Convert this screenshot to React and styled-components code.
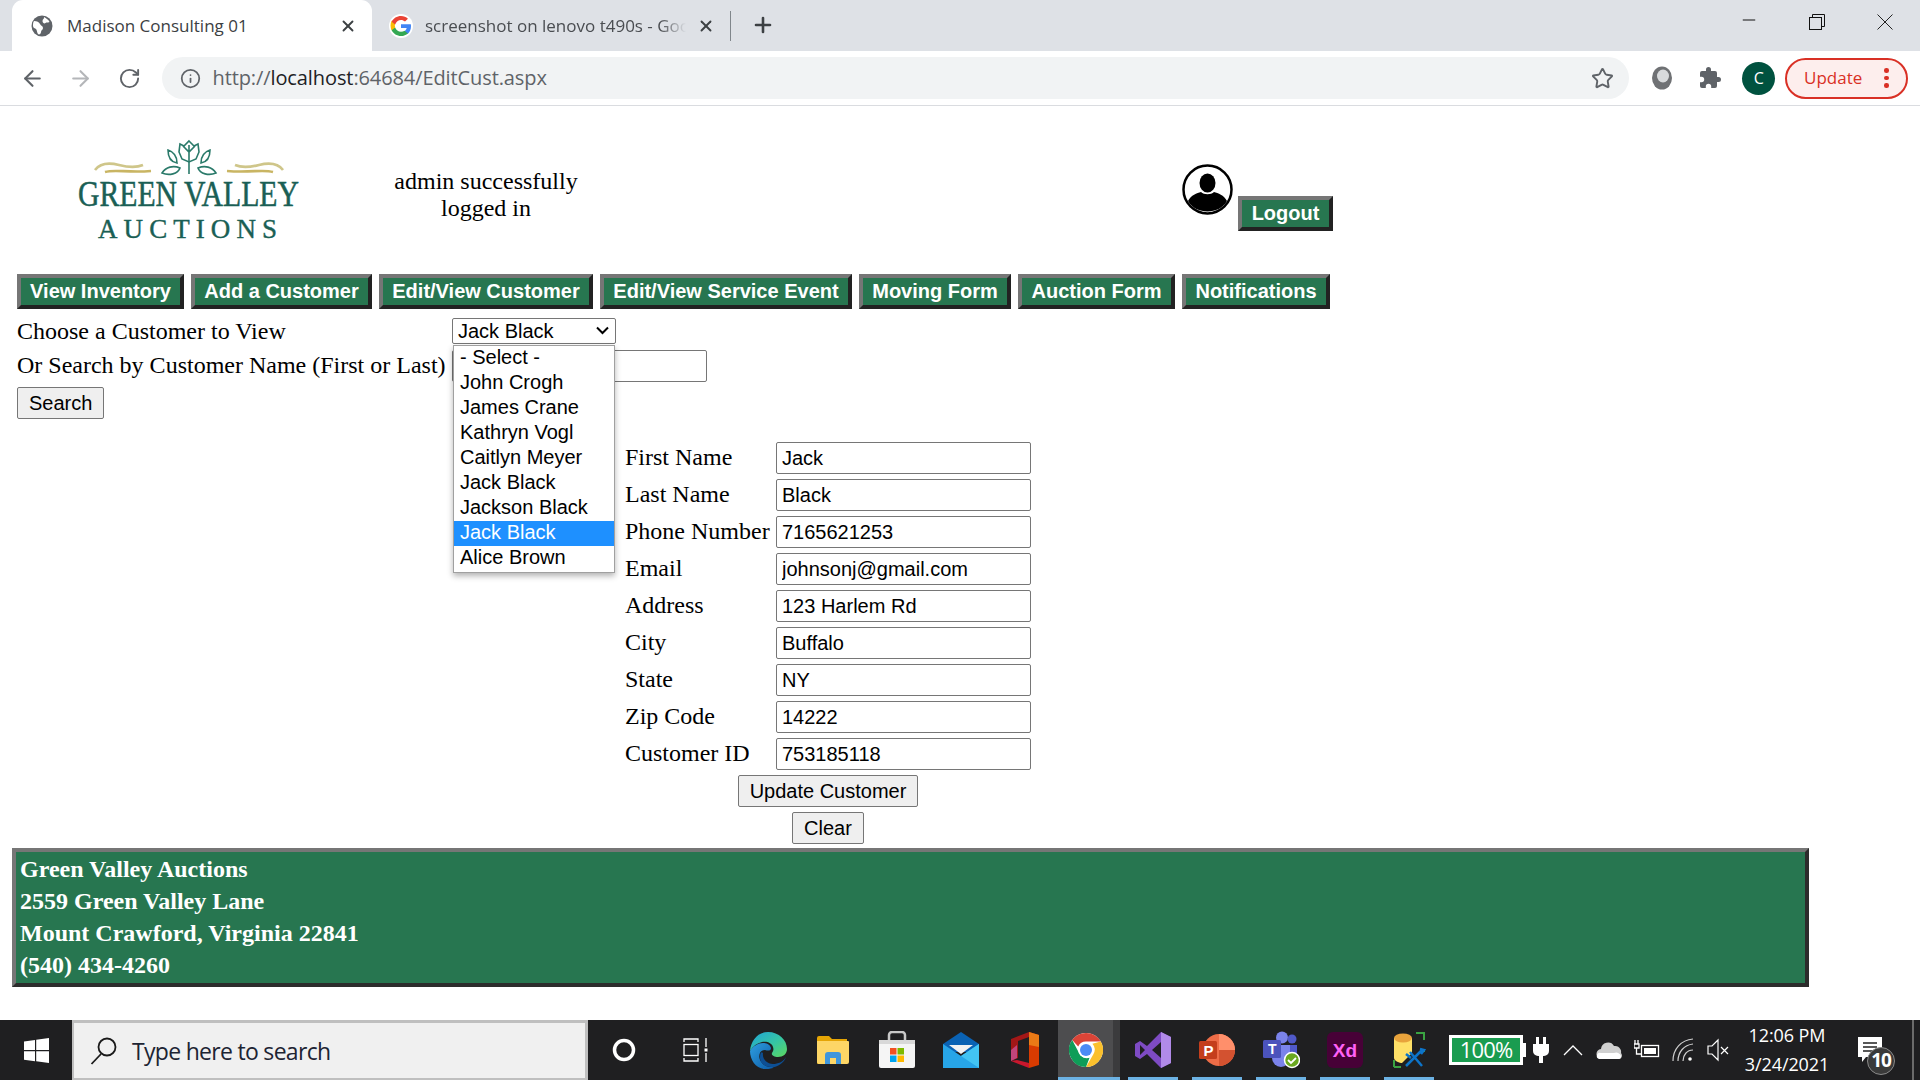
import React from "react";
import styled, { createGlobalStyle } from "styled-components";
import { ArrowLeft, ArrowRight, RotateCw, Info, Star, X, Plus, Minus } from "lucide-react";

const Global = createGlobalStyle`
  html, body { margin: 0; padding: 0; background: #fff; }
  #root { width: 1920px; height: 1080px; overflow: hidden; }
`;
const serif = `"Liberation Serif", "Times New Roman", serif`;
const arial = `"Liberation Sans", Arial, sans-serif`;
const ui = `"Open Sans", "Noto Sans", sans-serif`;

const Screen = styled.div`display:flex;flex-direction:column;width:1920px;height:1080px;background:#fff;position:relative;`;
const TabStrip = styled.div`display:flex;align-items:flex-end;height:51px;background:#dee1e6;padding-left:12px;flex:none;`;
const ActiveTab = styled.div`display:flex;align-items:center;width:360px;height:51px;background:#fff;border-radius:11px 11px 0 0;box-sizing:border-box;padding-left:19px;`;
const InactiveTab = styled.div`display:flex;align-items:center;width:358px;height:51px;box-sizing:border-box;padding-left:17px;`;
const TabTitle = styled.div`font:17px/24px ${ui};color:${p=>p.$dim?"#4a4d51":"#3c4043"};width:${p=>p.$w}px;margin-left:${p=>p.$ml}px;white-space:nowrap;overflow:hidden;${p=>p.$fade?"mask-image:linear-gradient(to right,#000 90%,transparent);":""}`;
const TabClose = styled.div`display:flex;margin-left:${p=>p.$ml}px;color:#3c4043;`;
const TabSep = styled.div`width:1px;height:30px;background:#80868b;margin:0 0 10px 0;`;
const NewTab = styled.div`display:flex;margin:0 0 14px 20px;color:#3c4043;`;
const WindowControls = styled.div`display:flex;margin-left:auto;margin-right:1px;align-self:stretch;`;
const WinBtn = styled.div`width:${p=>p.$w}px;display:flex;justify-content:center;padding-top:${p=>p.$t}px;box-sizing:border-box;`;

const Toolbar = styled.div`display:flex;align-items:center;height:55px;padding-left:8px;box-sizing:border-box;border-bottom:1px solid #dadce0;flex:none;`;
const NavBtn = styled.div`width:48.5px;display:flex;justify-content:center;color:${p=>p.$off?"#b4b6b9":"#5f6368"};`;
const Omnibox = styled.div`display:flex;align-items:center;width:1467px;height:42px;margin-left:8px;background:#f1f3f4;border-radius:21px;box-sizing:border-box;padding:0 15px 0 18px;color:#5f6368;`;
const Url = styled.div`font:20px/26px ${ui};color:#5f6368;margin-left:12px;letter-spacing:-0.1px;flex:1;b{font-weight:400;color:#202124;}`;
const ToolIcon = styled.div`width:48.5px;display:flex;justify-content:center;`;
const Tools = styled.div`display:flex;align-items:center;margin-left:9px;`;
const AvatarC = styled.div`width:33px;height:33px;border-radius:50%;background:#00523f;color:#fff;font:16px/33px ${ui};text-align:center;`;
const UpdatePill = styled.div`display:flex;align-items:center;width:123px;height:41px;margin-left:2px;box-sizing:border-box;border:2px solid #d93025;border-radius:21px;background:#fdeeed;color:#d93025;font:17px/24px ${ui};padding-left:17px;`;
const Dots = styled.div`display:flex;flex-direction:column;gap:3px;margin-left:22px;i{display:block;width:4.5px;height:4.5px;border-radius:50%;background:#d93025;}`;

const Page = styled.main`flex:1;min-height:0;position:relative;`;
const Header = styled.header`display:grid;grid-template-columns:386px 200px 596px auto;height:168px;`;
const LogoCell = styled.div`padding:30px 0 0 75px;`;
const Message = styled.div`font:24px/27px ${serif};text-align:center;color:#000;padding-top:62px;`;
const UserCell = styled.div`grid-column:4;display:flex;align-items:flex-start;padding-top:58px;`;
const Logout = styled.div`margin:32px 0 0 5px;`;
const Raised = styled.div`display:inline-block;width:${p=>p.$w}px;height:35px;box-sizing:border-box;border:4px solid;border-color:#767676 #222 #222 #767676;background:#277650;color:#fff;font:bold 20px/27px ${arial};text-align:center;white-space:nowrap;flex:none;`;
const Nav = styled.nav`display:flex;gap:7px;padding-left:17px;`;
const SelectRow = styled.div`display:flex;align-items:center;height:26px;margin-top:9px;padding-left:17px;`;
const SearchRow = styled.div`display:flex;align-items:center;height:32px;margin-top:6px;padding-left:17px;`;
const PlainLabel = styled.label`font:24px/27px ${serif};color:#000;width:435px;white-space:nowrap;padding-bottom:${p=>p.$up?2:0}px;`;
const SelectWrap = styled.div`position:relative;width:164px;height:26px;`;
const CustomerSelect = styled.select`display:block;appearance:none;width:164px;height:26px;font:20px ${arial};padding:0 0 0 5px;background:#fff;color:#000;border:1px solid #767676;border-radius:2px;box-sizing:border-box;`;
const SelectChevron = styled.svg`position:absolute;right:7px;top:8px;pointer-events:none;`;
const TextInput = styled.input`box-sizing:border-box;height:32px;width:${p=>p.$w}px;font:20px ${arial};color:#000;border:1px solid #767676;border-radius:2px;padding:0 5px;background:#fff;outline:none;`;
const GrayButton = styled.button`display:block;height:32px;font:20px ${arial};color:#000;background:#efefef;border:1px solid #767676;border-radius:2px;padding:0 ${p=>p.$pad}px;`;
const SearchBtnWrap = styled.div`padding:5px 0 0 17px;`;
const Form = styled.form`display:grid;grid-template-columns:151px 255px;row-gap:5px;margin:23px 0 0 625px;width:406px;align-items:center;`;
const FieldLabel = styled.label`font:24px/27px ${serif};color:#000;white-space:nowrap;padding-bottom:2px;`;
const FormBtn = styled.div`grid-column:1/-1;display:flex;justify-content:center;`;
const Footer = styled.footer`margin:4px 0 0 12px;width:1797px;height:139px;box-sizing:border-box;border:4px solid;border-color:#767676 #2c2c2c #2c2c2c #767676;background:#277650;color:#fff;font:bold 24px/32px ${serif};padding:1px 0 0 4px;`;
const Dropdown = styled.ul`position:absolute;left:453px;top:239px;width:162px;height:228px;margin:0;padding:0;list-style:none;box-sizing:border-box;background:#fff;border:1px solid #a0a0a0;box-shadow:0 3px 6px rgba(0,0,0,.3);z-index:2;`;
const Option = styled.li`height:25px;font:20px/23px ${arial};padding-left:6px;background:${p=>p.$on?"#1e90ff":"#fff"};color:${p=>p.$on?"#fff":"#000"};`;

const Taskbar = styled.div`display:flex;align-items:stretch;height:60px;background:#1f1f21;flex:none;position:relative;`;
const StartBtn = styled.div`width:72px;flex:none;display:flex;align-items:center;justify-content:center;`;
const SearchBox = styled.div`width:516px;flex:none;box-sizing:border-box;background:#f0f0f0;border:3px solid #bfbfbf;border-left-width:2px;border-bottom-width:2px;display:flex;align-items:center;padding-left:16px;font:23px/32px ${ui};color:#1d2433;letter-spacing:-0.7px;`;
const SearchText = styled.span`margin-left:14px;`;
const Slot = styled.div`width:${p=>p.$w}px;margin-left:${p=>p.$ml||0}px;display:flex;align-items:center;justify-content:center;position:relative;flex:none;box-sizing:border-box;border-bottom:${p=>p.$run?"3px solid #6cb2e4":"0"};padding-top:${p=>p.$run?3:0}px;padding-right:${p=>p.$hi?7:0}px;${p=>p.$hi?"background:linear-gradient(to right,#4d4d4f 55px,#3b3b3d 55px);":""}`;
const BatteryBox = styled.div`width:74px;height:30px;box-sizing:border-box;border:3px solid #fff;background:#1a9c50;color:#fff;font:22px/23px ${ui};text-align:center;letter-spacing:-0.8px;`;
const BatteryNub = styled.div`width:3px;height:14px;background:#fff;`;
const BatteryWrap = styled.div`display:flex;align-items:center;margin-left:15px;flex:none;`;
const TrayIcon = styled.div`width:${p=>p.$w}px;display:flex;align-items:center;justify-content:center;flex:none;`;
const Clock = styled.div`width:104px;color:#fff;font:18px/29px ${ui};text-align:center;align-self:center;flex:none;letter-spacing:-0.1px;`;
const Notify = styled.div`position:relative;width:50px;margin-left:6px;display:flex;align-items:center;justify-content:center;flex:none;`;
const Badge = styled.div`position:absolute;left:22px;top:27px;width:28px;height:28px;border-radius:50%;background:#3a3a3a;border:1px solid #8a8a8a;box-sizing:border-box;color:#fff;font:bold 19px/25px ${ui};text-align:center;letter-spacing:-1px;`;
const EdgeLine = styled.div`position:absolute;right:6px;top:0;bottom:0;width:2px;background:#6b6b6b;`;

const Globe = () => (
  <svg width="22" height="22" viewBox="0 0 22 22"><circle cx="11" cy="11" r="10.5" fill="#5f6368"/><path d="M3 6c3 0 5 1 6 3s3 2 3 4-2 2-2 4-2 3-3 2-1-4-2-5-3-1-3-3 0-4 1-5zM13 2c2 1 5 3 5.500 5-2 1-3 0-4 1s-3 0-3-2 2-2 1.500-4z" fill="#fff"/></svg>
);
const GoogleG = () => (
  <svg width="24" height="24" viewBox="0 0 48 48"><circle cx="24" cy="24" r="24" fill="#fff"/>
    <path fill="#4285F4" d="M44 24.500c0-1.400-.1-2.700-.4-4H24v7.700h11.300c-.5 2.600-2 4.800-4.200 6.300v5.200h6.700C41.700 36 44 30.800 44 24.500z"/>
    <path fill="#34A853" d="M24 44c5.600 0 10.300-1.900 13.800-5.100l-6.700-5.200c-1.900 1.300-4.300 2-7.100 2-5.400 0-10-3.700-11.700-8.600H5.300v5.400C8.700 39.400 15.800 44 24 44z"/>
    <path fill="#FBBC05" d="M12.300 27.100c-.9-2.600-.9-5.500 0-8.200v-5.400H5.300c-2.900 5.900-2.900 13 0 19z"/>
    <path fill="#EA4335" d="M24 12.100c3.100 0 5.800 1.100 8 3.100l5.900-5.900C34.300 6 29.600 4 24 4 15.800 4 8.700 8.600 5.300 15.500l7 5.400C14 15.900 18.600 12.100 24 12.100z"/></svg>
);
const Puzzle = () => (
  <svg width="24" height="24" viewBox="0 0 24 24"><path fill="#5f6368" d="M20.500 11H19V7a2 2 0 0 0-2-2h-4V3.500a2.500 2.500 0 0 0-5 0V5H4a2 2 0 0 0-2 2v3.800h1.500a2.700 2.700 0 0 1 0 5.400H2V20a2 2 0 0 0 2 2h3.800v-1.500a2.700 2.700 0 0 1 5.400 0V22H17a2 2 0 0 0 2-2v-4h1.500a2.500 2.500 0 0 0 0-5z"/></svg>
);
const Orb = () => (
  <svg width="22" height="26" viewBox="0 0 22 26"><ellipse cx="11" cy="13" rx="10" ry="11.500" fill="#6f7174"/><ellipse cx="12" cy="11" rx="6" ry="6.500" fill="#d8dadc"/></svg>
);
const RestoreIcon = () => (
  <svg width="16" height="16" viewBox="0 0 16 16" fill="none" stroke="#111" strokeWidth="1"><rect x=".5" y="3.500" width="12" height="12" /><path d="M3.500 3.500v-3h12v12h-3"/></svg>
);
const CloseIcon = () => (
  <svg width="16" height="16" viewBox="0 0 16 16" stroke="#222" strokeWidth="1"><path d="M.5.500l15 15M15.500.500l-15 15"/></svg>
);
const Logo = () => (
  <svg width="230" height="106" viewBox="75 136 230 106" style={{ overflow: "visible" }}>
    <g fill="none" stroke="#2a7a6a" strokeWidth="1.600">
      <path d="M189 141l5 5 4-2 1 8-3 7-7 3-7-3-3-7 1-8 4 2z"/>
      <path d="M189 145v29M183 146l6 6 6-6"/>
      <path d="M168 150c6 2 9 7 9 13-6-1-9-6-9-13zM210 150c-6 2-9 7-9 13 6-1 9-6 9-13z"/>
      <path d="M162 173c4-6 11-8 18-5-2 6-11 8-18 5zM216 173c-4-6-11-8-18-5 2 6 11 8 18 5z"/>
    </g>
    <g fill="none" strokeWidth="2.600">
      <path d="M95 170c6-8 16-7 24-5s17 3 24 0" stroke="#cfc68a"/>
      <path d="M105 172c10-3 22 1 46-1" stroke="#c9b563"/>
      <path d="M283 170c-6-8-16-7-24-5s-17 3-24 0" stroke="#cfc68a"/>
      <path d="M273 172c-10-3-22 1-46-1" stroke="#c9b563"/>
    </g>
    <text x="78" y="206" fill="#1a5f55" stroke="#1a5f55" strokeWidth=".5" fontFamily='"Liberation Serif", serif' fontSize="35" textLength="221" lengthAdjust="spacingAndGlyphs">GREEN VALLEY</text>
    <text x="98" y="238" fill="#1a5f55" stroke="#1a5f55" strokeWidth=".4" fontFamily='"Liberation Serif", serif' fontSize="27" textLength="179" lengthAdjust="spacing">AUCTIONS</text>
  </svg>
);
const UserAvatar = () => (
  <svg width="51" height="51" viewBox="0 0 51 51"><circle cx="25.500" cy="25.500" r="24" fill="#fff" stroke="#000" strokeWidth="2.500"/><ellipse cx="25.500" cy="19" rx="8" ry="9.500"/><path d="M6 37c3-6 9-8 13-9 3 3 10 3 13 0 4 1 10 3 13 9-8 14-31 14-39 0z"/></svg>
);
const WinLogo = () => (
  <svg width="25" height="25" viewBox="0 0 25 25" fill="#fff"><path d="M0 3.500l11-1.500v10H0zM12.200 1.800L25 0v12H12.200zM0 13.200h11v10L0 21.700zM12.200 13.200H25V25l-12.800-1.800z"/></svg>
);
const Magnifier = () => (
  <svg width="28" height="30" viewBox="0 0 28 30" fill="none" stroke="#1a1a1a" strokeWidth="1.800"><circle cx="17" cy="11" r="8.500"/><path d="M11 18L1.500 28"/></svg>
);
const Cortana = () => (<svg width="24" height="24" viewBox="0 0 24 24"><circle cx="12" cy="12" r="9.500" fill="none" stroke="#fff" strokeWidth="3.500"/></svg>);
const TaskView = () => (
  <svg width="26" height="26" viewBox="0 0 26 26" fill="none" stroke="#fff" strokeWidth="1.300"><path d="M1 5V2h14v3M1 21v3h14v-3"/><rect x="1" y="7.500" width="14" height="11"/><path d="M23 1v9M23 16v9"/><rect x="21.500" y="11.500" width="3" height="3" fill="#fff" stroke="none"/></svg>
);
const Edge = () => (
  <svg width="37" height="37" viewBox="0 0 37 37">
    <defs>
      <linearGradient id="eg1" x1="0" y1="0" x2="1" y2="1"><stop offset="0" stopColor="#1fa3d8"/><stop offset=".55" stopColor="#36c6a3"/><stop offset="1" stopColor="#5dd85f"/></linearGradient>
      <linearGradient id="eg2" x1="0" y1="0" x2="1" y2="1"><stop offset="0" stopColor="#2f9fe0"/><stop offset="1" stopColor="#0c5aa6"/></linearGradient>
    </defs>
    <path d="M18 0c11 0 19 8 19 17 0 5-4 8-9 8-4 0-7-2-6-4 1-2 2-3 1-6-1-4-6-6-11-5-5 1-9 4-12 9C1 8 8 0 18 0z" fill="url(#eg1)"/>
    <path d="M0 19c3-5 8-8 13-8 3 0 7 1 8 5 0 3-3 3-6 2-5 0-7 5-5 10 2 4 6 7 11 7 2 0 3 1 2 1-3 1-6 1-8 1C6 37 0 28 0 19z" fill="url(#eg2)"/>
    <path d="M13 21c-1 6 4 11 10 11 5 0 10-2 13-7-2 6-9 11-15 10-6 0-11-4-11-9s1-7 3-5z" fill="#0d4f94"/>
  </svg>
);
const Folder = () => (
  <svg width="32" height="28" viewBox="0 0 32 28"><path d="M0 2a2 2 0 0 1 2-2h10l3 3h15v25H1.500A1.500 1.500 0 0 1 0 26.500z" fill="#e5a505"/><path d="M0 5h31a1 1 0 0 1 1 1v20a2 2 0 0 1-2 2H2a2 2 0 0 1-2-2z" fill="#fdd666"/><path d="M8 28v-9a3 3 0 0 1 3-3h10a3 3 0 0 1 3 3v9h-5v-6h-6v6z" fill="#3f96dc"/></svg>
);
const Store = () => (
  <svg width="36" height="38" viewBox="0 0 36 38"><path d="M10 9V4a3 3 0 0 1 3-3h10a3 3 0 0 1 3 3v5" fill="none" stroke="#c8c8c8" strokeWidth="2.500"/><path d="M0 9h36v26a2 2 0 0 1-2 2H2a2 2 0 0 1-2-2z" fill="#f5f5f5"/><path d="M0 9h36v4H0z" fill="#d8d8d8"/><rect x="11" y="17" width="6.500" height="6.500" fill="#f25022"/><rect x="18.500" y="17" width="6.500" height="6.500" fill="#7fba00"/><rect x="11" y="24.500" width="6.500" height="6.500" fill="#00a4ef"/><rect x="18.500" y="24.500" width="6.500" height="6.500" fill="#ffb900"/></svg>
);
const Mail = () => (
  <svg width="36" height="36" viewBox="0 0 36 36"><path d="M0 12L18 0l18 12v8H0z" fill="#0a62b4"/><path d="M6 13h24l-12 9z" fill="#f2f2f2"/><path d="M0 12l18 12 18-12v24H0z" fill="#27a5e8"/><path d="M36 12v24L18 24z" fill="#42c4f3"/></svg>
);
const Office = () => (
  <svg width="28" height="36" viewBox="0 0 28 36"><path d="M18 0l10 3v30l-10 3z" fill="#d83b01"/><path d="M18 0l10 3v12l-10-2z" fill="#ea7a16"/><path d="M18 0v5L7 9v17l-7 3V7z" fill="#a31717"/><path d="M0 29l18 7V31L6 28z" fill="#c9172d"/><path d="M0 18v11l6-3V13z" fill="#c2457b"/></svg>
);
const Chrome = () => (
  <svg width="34" height="34" viewBox="0 0 48 48"><circle cx="24" cy="24" r="24" fill="#fff"/><path d="M24 0a24 24 0 0 1 20.800 12H24a12 12 0 0 0-11 7L4.500 10A24 24 0 0 1 24 0z" fill="#db4437"/><path d="M44.800 12A24 24 0 0 1 24 48l10.400-18A12 12 0 0 0 33 15z" fill="#fbc02d"/><path d="M4.500 10L14 28a12 12 0 0 0 15 7l-5 13A24 24 0 0 1 4.500 10z" fill="#0f9d58"/><circle cx="24" cy="24" r="11" fill="#fff"/><circle cx="24" cy="24" r="8.500" fill="#4b8bf5"/></svg>
);
const VS = () => (
  <svg width="36" height="36" viewBox="0 0 36 36"><path d="M26 0l10 5v26l-10 5-14-14-7 5-5-3V12l5-3 7 5zM5 13v10l5-5zM26 10l-9 8 9 8z" fill="#7e4bc4" fillRule="evenodd"/><path d="M26 0l10 5v26l-10 5z" fill="#b18ae8"/></svg>
);
const PPT = () => (
  <svg width="36" height="36" viewBox="0 0 36 36"><circle cx="20" cy="18" r="16" fill="#ed6c47"/><path d="M20 2a16 16 0 0 1 16 16H20z" fill="#ff8f6b"/><path d="M20 18h16a16 16 0 0 1-16 16z" fill="#d35230"/><rect x="0" y="9" width="18" height="18" rx="1.500" fill="#c43e1c"/><text x="4.500" y="23.500" fill="#fff" fontFamily='"Liberation Sans"' fontWeight="700" fontSize="15">P</text></svg>
);
const Teams = () => (
  <svg width="38" height="38" viewBox="0 0 38 38"><circle cx="20" cy="6.500" r="6" fill="#7b83eb"/><circle cx="30" cy="8" r="4.500" fill="#5059c9"/><path d="M24 14h11v11a6 6 0 0 1-8 4z" fill="#5059c9"/><path d="M10 14h18v13a9 9 0 0 1-18 0z" fill="#7b83eb"/><rect x="1" y="9" width="18" height="18" rx="1.500" fill="#4b53bc"/><text x="6" y="23" fill="#fff" fontFamily='"Liberation Sans"' fontWeight="700" fontSize="14">T</text><circle cx="30" cy="29" r="7.500" fill="#6aa820" stroke="#fff" strokeWidth="1.500"/><path d="M26 29l3 3 5-5" fill="none" stroke="#fff" strokeWidth="1.800"/></svg>
);
const Xd = () => (
  <svg width="36" height="36" viewBox="0 0 36 36"><rect width="36" height="36" rx="6" fill="#470137"/><text x="18" y="25" textAnchor="middle" fill="#ff61f6" fontFamily='"Liberation Sans"' fontWeight="700" fontSize="19">Xd</text></svg>
);
const DbTools = () => (
  <svg width="34" height="36" viewBox="0 0 34 36"><path d="M2 6v20c0 3 6 5 8 5l10-10V6z" fill="#ffe067"/><ellipse cx="11" cy="6" rx="9" ry="4.500" fill="#e8a33c"/><path d="M24 1h8v7M2 35h7M2 28v7M32 20v-2" fill="none" stroke="#3aa342" strokeWidth="2"/><path d="M14 34l16-16M18 20l12 14M14 22l5 4M28 17l4 1-3 4" fill="none" stroke="#0d74c9" strokeWidth="2.500"/></svg>
);
const Plug = () => (<svg width="16" height="26" viewBox="0 0 16 26" fill="#fff"><rect x="3" y="0" width="3" height="8"/><rect x="10" y="0" width="3" height="8"/><path d="M0 7h16v7a5 5 0 0 1-5 5H10v7H6v-7H5a5 5 0 0 1-5-5z"/></svg>);
const Chevron = () => (<svg width="20" height="12" viewBox="0 0 20 12" fill="none" stroke="#fff" strokeWidth="1.300"><path d="M1 11l9-9 9 9"/></svg>);
const Cloud = () => (<svg width="26" height="18" viewBox="0 0 26 18"><path d="M6 18a5 5 0 0 1-1-10 7 7 0 0 1 13-3 6 6 0 0 1 7 7 4 4 0 0 1-1 6z" fill="#d0d0d0"/><path d="M3 18a3 3 0 0 1 2-6l13 0a5 5 0 0 1 7 3 3 3 0 0 1-2 3z" fill="#fff"/></svg>);
const BatteryPlug = () => (<svg width="26" height="22" viewBox="0 0 26 22" fill="none" stroke="#fff" strokeWidth="1.300"><rect x="7.500" y="6.500" width="17" height="11"/><rect x="10" y="9" width="12" height="6" fill="#fff" stroke="none"/><path d="M4 1v4M1 1v4M0 5h5v4H0zM2.500 9v6h5"/></svg>);
const Wifi = () => (<svg width="24" height="24" viewBox="0 0 24 24" fill="none" stroke="#d0d0d0" strokeWidth="1.200"><path d="M2 23C2 11 10 2 22 1M7 23c0-9 6-16 15-17M12 23c0-6 4-11 10-11"/><circle cx="19" cy="21" r="1.800" fill="#fff" stroke="none"/></svg>);
const Speaker = () => (<svg width="22" height="24" viewBox="0 0 22 24" fill="none" stroke="#fff" strokeWidth="1.200"><path d="M1 8h4l6-6v20l-6-6H1zM14 9l7 7M21 9l-7 7"/></svg>);
const Comment = () => (<svg width="24" height="26" viewBox="0 0 24 26"><path d="M0 0h24v20H8l-4 5v-5H0z" fill="#fff"/><path d="M5 6h14M5 10h14M5 14h14" stroke="#222" strokeWidth="1.300"/></svg>);

const navItems = [["View Inventory",167],["Add a Customer",181],["Edit/View Customer",214],["Edit/View Service Event",252],["Moving Form",152],["Auction Form",157],["Notifications",148]];
const customers = ["- Select -","John Crogh","James Crane","Kathryn Vogl","Caitlyn Meyer","Jack Black","Jackson Black","Jack Black","Alice Brown"];
const fields = [["First Name","Jack"],["Last Name","Black"],["Phone Number","7165621253"],["Email","johnsonj@gmail.com"],["Address","123 Harlem Rd"],["City","Buffalo"],["State","NY"],["Zip Code","14222"],["Customer ID","753185118"]];

export default function App() {
  return (
    <Screen>
      <Global />
      <TabStrip>
        <ActiveTab>
          <Globe />
          <TabTitle $ml={14} $w={264}>Madison Consulting 01</TabTitle>
          <TabClose $ml={8}><X size={18} strokeWidth={2.5} /></TabClose>
        </ActiveTab>
        <InactiveTab>
          <GoogleG />
          <TabTitle $dim $fade $ml={12} $w={261}>screenshot on lenovo t490s - Google Search</TabTitle>
          <TabClose $ml={11}><X size={18} strokeWidth={2.5} /></TabClose>
        </InactiveTab>
        <TabSep />
        <NewTab><Plus size={24} strokeWidth={2.6} /></NewTab>
        <WindowControls>
          <WinBtn $w={68} $t={10}><Minus size={20} color="#111" strokeWidth={1.2} /></WinBtn>
          <WinBtn $w={68} $t={14}><RestoreIcon /></WinBtn>
          <WinBtn $w={68} $t={14}><CloseIcon /></WinBtn>
        </WindowControls>
      </TabStrip>
      <Toolbar>
        <NavBtn><ArrowLeft size={25} strokeWidth={2} /></NavBtn>
        <NavBtn $off><ArrowRight size={25} strokeWidth={2} /></NavBtn>
        <NavBtn><RotateCw size={23} strokeWidth={2} /></NavBtn>
        <Omnibox>
          <Info size={21} strokeWidth={2} />
          <Url>http://<b>localhost</b>:64684/EditCust.aspx</Url>
          <Star size={23} strokeWidth={2} />
        </Omnibox>
        <Tools>
          <ToolIcon><Orb /></ToolIcon>
          <ToolIcon><Puzzle /></ToolIcon>
          <ToolIcon><AvatarC>C</AvatarC></ToolIcon>
          <UpdatePill>Update<Dots><i /><i /><i /></Dots></UpdatePill>
        </Tools>
      </Toolbar>
      <Page>
        <Header>
          <LogoCell><Logo /></LogoCell>
          <Message>admin successfully<br />logged in</Message>
          <UserCell>
            <UserAvatar />
            <Logout><Raised $w={95}>Logout</Raised></Logout>
          </UserCell>
        </Header>
        <Nav>{navItems.map(([n, w]) => <Raised key={n} $w={w}>{n}</Raised>)}</Nav>
        <SelectRow>
          <PlainLabel>Choose a Customer to View</PlainLabel>
          <SelectWrap>
            <CustomerSelect defaultValue="7">
              {customers.map((c, i) => <option key={i} value={i}>{c}</option>)}
            </CustomerSelect>
            <SelectChevron width="13" height="9" viewBox="0 0 13 9" fill="none" stroke="#000" strokeWidth="2"><path d="M1 1.500l5.500 5.500 5.500-5.500" /></SelectChevron>
          </SelectWrap>
        </SelectRow>
        <SearchRow>
          <PlainLabel $up>Or Search by Customer Name (First or Last)</PlainLabel>
          <TextInput $w={255} />
        </SearchRow>
        <SearchBtnWrap><GrayButton type="button" $pad={11}>Search</GrayButton></SearchBtnWrap>
        <Dropdown>
          {customers.map((c, i) => <Option key={i} $on={i === 7}>{c}</Option>)}
        </Dropdown>
        <Form>
          {fields.map(([l, v]) => (
            <React.Fragment key={l}>
              <FieldLabel>{l}</FieldLabel>
              <TextInput $w={255} defaultValue={v} />
            </React.Fragment>
          ))}
          <FormBtn><GrayButton type="button" $pad={11}>Update Customer</GrayButton></FormBtn>
          <FormBtn><GrayButton type="button" $pad={11}>Clear</GrayButton></FormBtn>
        </Form>
        <Footer>
          Green Valley Auctions<br />
          2559 Green Valley Lane<br />
          Mount Crawford, Virginia 22841<br />
          (540) 434-4260
        </Footer>
      </Page>
      <Taskbar>
        <StartBtn><WinLogo /></StartBtn>
        <SearchBox><Magnifier /><SearchText>Type here to search</SearchText></SearchBox>
        <Slot $w={72}><Cortana /></Slot>
        <Slot $w={72}><TaskView /></Slot>
        <Slot $w={64} $ml={4}><Edge /></Slot>
        <Slot $w={65}><Folder /></Slot>
        <Slot $w={64}><Store /></Slot>
        <Slot $w={64}><Mail /></Slot>
        <Slot $w={63}><Office /></Slot>
        <Slot $w={62} $ml={2} $hi $run><Chrome /></Slot>
        <Slot $w={50} $ml={8} $run><VS /></Slot>
        <Slot $w={50} $ml={14} $run><PPT /></Slot>
        <Slot $w={50} $ml={14} $run><Teams /></Slot>
        <Slot $w={50} $ml={14} $run><Xd /></Slot>
        <Slot $w={50} $ml={14} $run><DbTools /></Slot>
        <BatteryWrap><BatteryBox>100%</BatteryBox><BatteryNub /></BatteryWrap>
        <TrayIcon $w={30}><Plug /></TrayIcon>
        <TrayIcon $w={33}><Chevron /></TrayIcon>
        <TrayIcon $w={40}><Cloud /></TrayIcon>
        <TrayIcon $w={36}><BatteryPlug /></TrayIcon>
        <TrayIcon $w={36}><Wifi /></TrayIcon>
        <TrayIcon $w={34}><Speaker /></TrayIcon>
        <Clock>12:06 PM<br />3/24/2021</Clock>
        <Notify><Comment /><Badge>10</Badge></Notify>
        <EdgeLine />
      </Taskbar>
    </Screen>
  );
}
